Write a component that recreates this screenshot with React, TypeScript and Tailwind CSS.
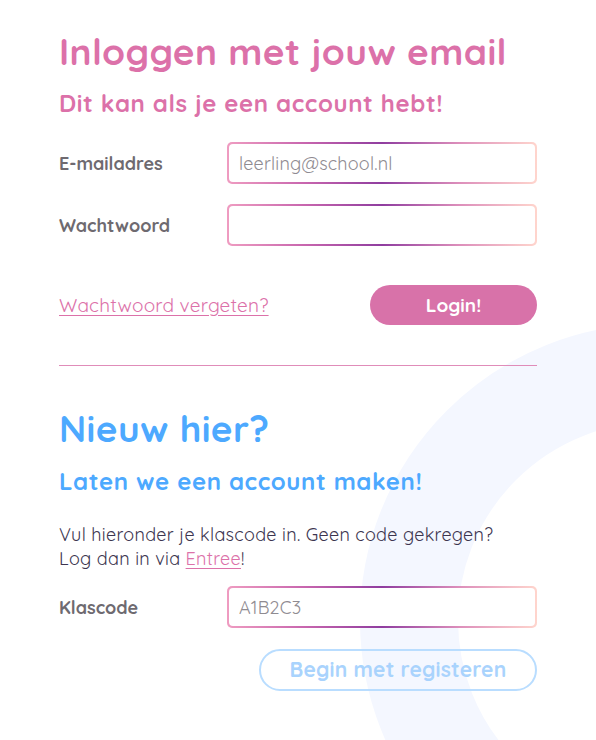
import { useState } from 'react';

// Gradient-omrande invoerveld met label ervoor
interface FieldRowProps {
  label: string;
  type?: string;
  value: string;
  placeholder?: string;
  onChange: (value: string) => void;
}

const FieldRow = ({ label, type = 'text', value, placeholder, onChange }: FieldRowProps) => (
  <div className="flex items-center">
    <label className="w-[168px] shrink-0 text-[18px] font-bold text-[#6e6a70]">{label}</label>
    <div className="flex-1 rounded-[5px] p-[2px] bg-[linear-gradient(90deg,#ef9cc1_0%,#c866ae_25%,#8f3d9f_50%,#dd8fbb_75%,#ffd5cd_100%)]">
      <input
        type={type}
        value={value}
        placeholder={placeholder}
        onChange={(e) => onChange(e.target.value)}
        className="block w-full h-[38px] rounded-[4px] bg-white px-[10px] text-[18px] tracking-[0.2px] text-[#888489] placeholder:text-[#8f8b91] outline-none"
      />
    </div>
  </div>
);

const App = () => {
  const [email, setEmail] = useState('');
  const [password, setPassword] = useState('');
  const [classCode, setClassCode] = useState('');

  return (
    <div
      className="relative min-h-[740px] w-full overflow-hidden bg-white"
      style={{ fontFamily: '"Quicksand", "Lato", "Noto Sans", sans-serif' }}
    >
      {/* Decoratieve ring op de achtergrond */}
      <svg className="absolute left-0 top-0 pointer-events-none" width="596" height="740" viewBox="0 0 596 740">
        <circle cx="656" cy="620" r="247" fill="none" stroke="#f4f7ff" strokeWidth="98" />
      </svg>

      <div className="relative mx-auto w-[478px] pt-[29px]">
        {/* Inloggen */}
        <h1 className="text-[37px] leading-[44px] font-bold text-[#dc71a9] tracking-[0.4px]">Inloggen met jouw email</h1>
        <h2 className="mt-[16px] text-[24px] leading-[28px] font-bold text-[#dc71a9] tracking-[0.6px]">Dit kan als je een account hebt!</h2>

        <div className="mt-[25px] flex flex-col gap-[20px]">
          <FieldRow label="E-mailadres" value={email} placeholder="leerling@school.nl" onChange={setEmail} />
          <FieldRow label="Wachtwoord" type="password" value={password} onChange={setPassword} />
        </div>

        <div className="mt-[39px] flex items-center justify-between">
          <a href="#" className="text-[19px] tracking-[0.2px] text-[#dc71a9] underline underline-offset-[3px]">Wachtwoord vergeten?</a>
          <button className="w-[167px] h-[40px] rounded-full bg-[#d872a9] text-white text-[19px] font-bold">Login!</button>
        </div>

        <hr className="mt-[40px] border-0 border-t border-[#e08cb9]" />

        {/* Registreren */}
        <h1 className="mt-[40px] text-[37px] leading-[44px] font-bold text-[#4da9ff] tracking-[0.4px]">Nieuw hier?</h1>
        <h2 className="mt-[17px] text-[24px] leading-[28px] font-bold text-[#4da9ff] tracking-[0.6px]">Laten we een account maken!</h2>

        <p className="mt-[28px] text-[18px] leading-[24px] tracking-[0.3px] text-[#3c354f]">
          Vul hieronder je klascode in. Geen code gekregen?
          <br />
          Log dan in via <a href="#" className="text-[#dc71a9] underline underline-offset-[3px]">Entree</a>!
        </p>

        <div className="mt-[15px]">
          <FieldRow label="Klascode" value={classCode} placeholder="A1B2C3" onChange={setClassCode} />
        </div>

        <div className="mt-[21px] flex justify-end">
          <button
            disabled
            className="w-[278px] h-[42px] rounded-full border-2 border-[#b9ddff] text-[#a9d3fd] text-[21px] font-bold tracking-[0.2px]"
          >
            Begin met registeren
          </button>
        </div>
      </div>
    </div>
  );
};

export default App;
